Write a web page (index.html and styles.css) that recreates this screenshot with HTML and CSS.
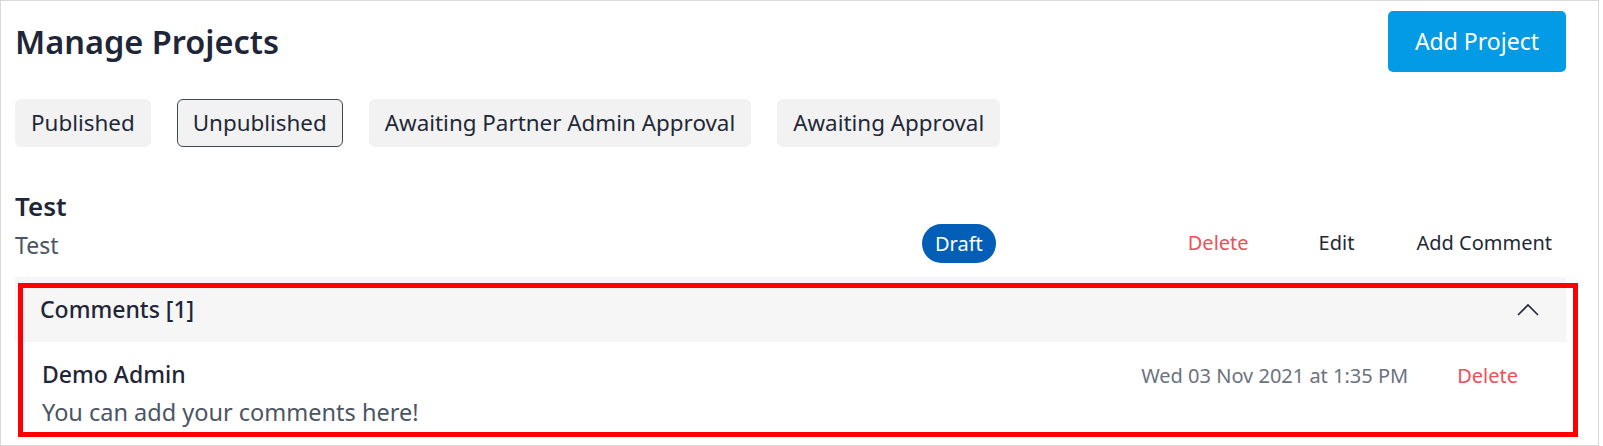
FILE: index.html
```html
<!DOCTYPE html>
<html lang="en">
<head>
<meta charset="utf-8">
<title>Manage Projects</title>
<link rel="stylesheet" href="styles.css">
</head>
<body>
<div class="page">
  <header class="page-header">
    <h1 class="title">Manage Projects</h1>
    <button class="btn-primary">Add Project</button>
  </header>

  <nav class="tabs">
    <button class="tab">Published</button>
    <button class="tab tab-active">Unpublished</button>
    <button class="tab">Awaiting Partner Admin Approval</button>
    <button class="tab">Awaiting Approval</button>
  </nav>

  <section class="project">
    <div class="project-info">
      <div class="project-name">Test</div>
      <div class="project-desc">Test</div>
    </div>
    <span class="badge">Draft</span>
    <div class="actions">
      <button class="action action-delete">Delete</button>
      <button class="action action-edit">Edit</button>
      <button class="action action-add">Add Comment</button>
    </div>
  </section>

  <section class="comments">
    <div class="comments-head">
      <span class="comments-title">Comments [1]</span>
      <svg class="chevron" width="22" height="13" viewBox="0 0 22 13" aria-hidden="true">
        <polyline points="1,12 11,2 21,12" fill="none" stroke="#1f2937" stroke-width="1.6"/>
      </svg>
    </div>
    <div class="comment">
      <div class="comment-top">
        <span class="comment-author">Demo Admin</span>
        <span class="comment-date">Wed 03 Nov 2021 at 1:35 PM</span>
        <button class="comment-delete">Delete</button>
      </div>
      <div class="comment-text">You can add your comments here!</div>
    </div>
  </section>

  <div class="highlight"></div>
</div>
</body>
</html>
```

FILE: styles.css
```css
* { box-sizing: border-box; }

html, body {
  margin: 0;
  padding: 0;
  background: #ffffff;
}

body {
  font-family: "Noto Sans", "Open Sans", "Liberation Sans", sans-serif;
  color: #1f2937;
}

button {
  font-family: inherit;
  border: none;
  background: none;
  margin: 0;
  padding: 0;
  cursor: pointer;
}

.page {
  position: relative;
  width: 1599px;
  height: 446px;
  border: 1px solid #d9d9d9;
  padding: 10px 32px 0 14px;
}

.page-header {
  display: flex;
  align-items: center;
  justify-content: space-between;
  height: 61px;
}

.title {
  margin: 0;
  font-size: 32.5px;
  line-height: 40px;
  font-weight: 600;
  color: #1e2637;
}

.btn-primary {
  height: 61px;
  padding: 0 27px;
  background: #039be5;
  color: #ffffff;
  font-size: 23px;
  line-height: 61px;
  border-radius: 5px;
}

.tabs {
  display: flex;
  gap: 26px;
  margin-top: 27px;
}

.tab {
  height: 48px;
  padding: 0 15px;
  background: #f2f2f2;
  border: 1px solid transparent;
  border-radius: 6px;
  font-size: 22.4px;
  line-height: 46px;
  color: #1f2937;
}

.tab-active {
  border-color: #3f4654;
}

.project {
  display: flex;
  align-items: flex-end;
  margin-top: 38px;
}

.project-info {
  flex: 1;
}

.project-name {
  font-size: 26px;
  line-height: 42px;
  font-weight: 600;
  color: #1e2637;
}

.project-desc {
  font-size: 23px;
  line-height: 36px;
  color: #4b5563;
}

.badge {
  height: 39px;
  padding: 0 13px;
  border-radius: 20px;
  background: #035eb7;
  color: #ffffff;
  font-size: 20px;
  line-height: 39px;
  margin-right: 192px;
}

.actions {
  display: flex;
  padding-right: 14px;
}

.action {
  font-size: 20px;
  line-height: 40px;
  color: #1f2937;
}

.action-delete {
  color: #ef4f5a;
  margin-right: 70px;
}

.action-edit {
  margin-right: 62px;
}

.comments {
  margin-top: 14px;
}

.comments-head {
  display: flex;
  align-items: center;
  justify-content: space-between;
  height: 65px;
  padding: 0 27px 0 25px;
  background: #f6f6f6;
}

.comments-title {
  font-size: 23px;
  line-height: 65px;
  font-weight: 500;
  color: #1e2637;
}

.chevron {
  display: block;
}

.comment {
  padding: 14px 48px 0 27px;
}

.comment-top {
  display: flex;
  align-items: baseline;
}

.comment-author {
  flex: 1;
  font-size: 23px;
  line-height: 36px;
  font-weight: 500;
  color: #1e2637;
}

.comment-date {
  font-size: 20px;
  line-height: 36px;
  color: #6b7280;
  margin-right: 49px;
}

.comment-delete {
  font-size: 20px;
  line-height: 36px;
  color: #ef4f5a;
}

.comment-text {
  font-size: 23.5px;
  line-height: 36px;
  color: #4b5563;
}

/* annotation overlay drawn over the comments panel */
.highlight {
  position: absolute;
  left: 17px;
  top: 282px;
  width: 1560px;
  height: 154px;
  border: 5px solid #ff0000;
  pointer-events: none;
}
```
